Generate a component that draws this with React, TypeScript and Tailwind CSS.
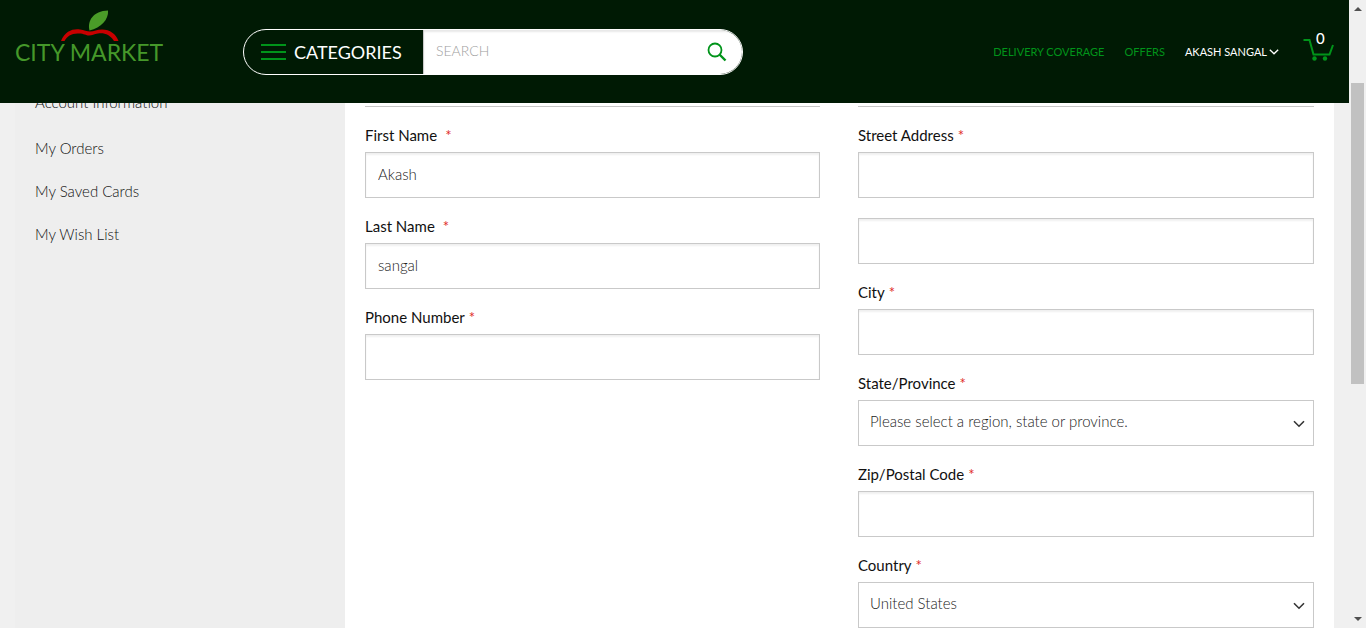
import { useState } from "react";
import type { ReactNode } from "react";

const links = ["Account Information", "My Orders", "My Saved Cards", "My Wish List"];

const box =
  "block h-[46px] w-full rounded-none border border-[#c9c9c9] bg-white px-3 pb-[3px] text-[15px] font-light text-[#222] outline-none";

function Label({ id, text, wide }: { id: string; text: string; wide?: boolean }) {
  return (
    <label htmlFor={id} className="mb-2 block text-[15px] leading-[18px] text-[#111]">
      {text}
      <span className={wide ? "ml-2 text-[#e02b27]" : "ml-1 text-[#e02b27]"}>*</span>
    </label>
  );
}

function TextField({ id, label, value = "", wide }: { id: string; label: string; value?: string; wide?: boolean }) {
  const [text, setText] = useState(value);
  return (
    <div>
      <Label id={id} text={label} wide={wide} />
      <input
        id={id}
        value={text}
        onChange={(e) => setText(e.target.value)}
        className={box + " shadow-[inset_0_2px_2px_#f0f0f0]"}
      />
    </div>
  );
}

function Chevron({ className }: { className: string }) {
  return (
    <svg viewBox="0 0 12 8" fill="none" stroke="currentColor" strokeWidth="1.6" className={className} aria-hidden="true">
      <path d="M1 1.2 6 6.2 11 1.2" />
    </svg>
  );
}

function SelectField({ id, label, children }: { id: string; label: string; children: ReactNode }) {
  return (
    <div>
      <Label id={id} text={label} />
      <div className="relative">
        <select id={id} className={box + " appearance-none pl-[11px]"}>
          {children}
        </select>
        <Chevron className="pointer-events-none absolute top-5 right-[9px] h-2 w-3 text-[#333]" />
      </div>
    </div>
  );
}

function Logo() {
  return (
    <a href="#" className="relative block w-[148px] pt-6 text-[23px] leading-9 whitespace-nowrap text-[#45982a]">
      <svg viewBox="0 0 60 34" className="absolute top-0 left-[46px] h-[34px] w-[60px]" aria-hidden="true">
        <path d="M28.500 20.500C26 11 32 1 47 0.500C48 9 40 18 28.500 20.500Z" fill="#4a9c28" />
        <path
          d="M0 31C4 21 12 18.500 19 19.500C23 20 26 21.500 29 21.500C33 21.500 36 19.500 41 19.500C49 19.500 55 24 57.500 31L53 31C49 24.500 43 22.500 37 23.500C33 24 31 25.500 28 25.500C25 25.500 23 23.500 18 23.500C11 23 6 26 3.500 31Z"
          fill="#c80000"
        />
      </svg>
      CITY MARKET
    </a>
  );
}

function Header() {
  return (
    <header className="relative z-10 flex h-[103px] shrink-0 items-start bg-[#001a04] px-[15px]">
      <div className="mt-[10px] w-[228px]">
        <Logo />
      </div>
      <div className="mt-[29px] flex h-[46px] w-[500px] overflow-hidden rounded-full border border-white">
        <button className="flex w-[180px] items-center gap-2 border-r border-[#c9c9c9] pl-[17px] text-[18px] text-white">
          <svg viewBox="0 0 25 16" className="h-4 w-[25px]" aria-hidden="true">
            <path d="M0 1h25M0 8h25M0 15h25" stroke="#00941a" strokeWidth="2" />
          </svg>
          CATEGORIES
        </button>
        <form className="flex flex-1 items-center bg-white pr-[15px] shadow-[inset_0_2px_2px_#e8e8e8]">
          <input
            aria-label="Search"
            placeholder="SEARCH"
            className="min-w-0 flex-1 bg-transparent px-3 pb-1 text-[14px] font-light outline-none placeholder:text-[#a0a0a0]"
          />
          <button type="button" aria-label="Submit search">
            <svg viewBox="0 0 20 20" fill="none" stroke="#00941a" strokeWidth="1.800" className="h-5 w-5">
              <circle cx="8" cy="8" r="6.500" />
              <path d="M12.500 12.500 18.500 18.500" strokeWidth="2.400" />
            </svg>
          </button>
        </form>
      </div>
      <nav className="mt-11 ml-auto flex items-center gap-5 text-[11px] leading-4 text-[#00941a]">
        <a href="#">DELIVERY COVERAGE</a>
        <a href="#">OFFERS</a>
        <button className="flex items-center gap-[2px] text-white">
          AKASH SANGAL
          <Chevron className="h-2 w-[10px]" />
        </button>
      </nav>
      <a href="#" aria-label="Cart" className="relative mt-8 ml-6 block">
        <svg viewBox="0 0 31 30" className="h-[30px] w-[31px]" fill="none" stroke="#00941a" strokeWidth="2" aria-hidden="true">
          <path d="M0.500 8H6.500L10.500 22.500H26.500L30 13" />
          <circle cx="11.500" cy="26.500" r="2.200" fill="#00941a" stroke="none" />
          <circle cx="22" cy="26.500" r="2.200" fill="#00941a" stroke="none" />
        </svg>
        <span className="absolute -top-1 left-[13px] text-[15px] leading-5 font-medium text-white">0</span>
      </a>
    </header>
  );
}

function Scrollbar() {
  return (
    <div className="flex h-full w-[17px] shrink-0 flex-col items-center bg-[#f0f0f0] py-[7px]" aria-hidden="true">
      <svg viewBox="0 0 8 4" className="h-1 w-2">
        <path d="M0 4 4 0 8 4Z" fill="#505050" />
      </svg>
      <div className="mt-[72px] h-[49%] w-[13px] bg-[#c1c1c1]" />
      <svg viewBox="0 0 8 4" className="mt-auto h-1 w-2">
        <path d="M0 0 4 4 8 0Z" fill="#505050" />
      </svg>
    </div>
  );
}

export default function App() {
  return (
    <div className="flex h-screen overflow-hidden bg-[#f0f0f0] font-['Lato','Open_Sans',sans-serif]">
      <div className="flex min-w-0 flex-1 flex-col">
        <Header />
        <main className="mx-[15px] -mt-4 flex flex-1">
          <aside className="w-[330px] shrink-0 bg-[#eee] px-5 pt-[5px]">
            <ul className="flex flex-col gap-[23px] text-[15px] leading-5 font-light text-[#111]">
              {links.map((link) => (
                <li key={link} className="first:mb-[3px]">
                  <a href="#">{link}</a>
                </li>
              ))}
            </ul>
          </aside>
          <form className="grid flex-1 grid-cols-[455fr_456fr] items-start gap-x-[38px] bg-white px-5 pt-[19px]">
            <div className="flex flex-col gap-[19px] border-t border-[#c6c6c6] pt-[19px]">
              <TextField id="first" label="First Name" value="Akash" wide />
              <TextField id="last" label="Last Name" value="sangal" wide />
              <TextField id="phone" label="Phone Number" />
            </div>
            <div className="flex flex-col gap-[19px] border-t border-[#c6c6c6] pt-[19px]">
              <div className="flex flex-col gap-5">
                <TextField id="street" label="Street Address" />
                <input aria-label="Street Address 2" className={box + " shadow-[inset_0_2px_2px_#f0f0f0]"} />
              </div>
              <TextField id="city" label="City" />
              <SelectField id="state" label="State/Province">
                <option>Please select a region, state or province.</option>
              </SelectField>
              <TextField id="zip" label="Zip/Postal Code" />
              <SelectField id="country" label="Country">
                <option>United States</option>
              </SelectField>
            </div>
          </form>
        </main>
      </div>
      <Scrollbar />
    </div>
  );
}
